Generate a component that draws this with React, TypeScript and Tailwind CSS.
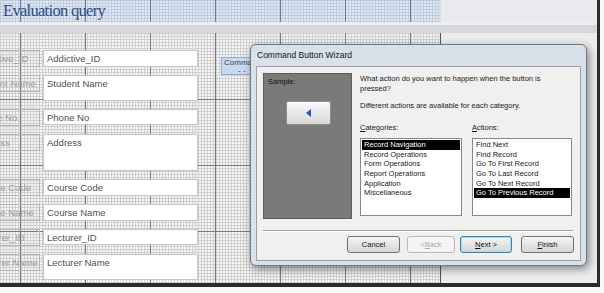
import React from "react";

const fields = [
  { label: "Addictive_ID", value: "Addictive_ID", h: "h-[17px]" },
  { label: "Student Name", value: "Student Name", h: "h-[26px]" },
  { label: "Phone No", value: "Phone No", h: "h-[16px]" },
  { label: "Address", value: "Address", h: "h-[37px]" },
  { label: "Course Code", value: "Course Code", h: "h-[17px]" },
  { label: "Course Name", value: "Course Name", h: "h-[17px]" },
  { label: "Lecturer_ID", value: "Lecturer_ID", h: "h-[16px]" },
  { label: "Lecturer Name", value: "Lecturer Name", h: "h-[26px]" },
];

const categories = ["Record Navigation", "Record Operations", "Form Operations", "Report Operations", "Application", "Miscellaneous"];
const actions = ["Find Next", "Find Record", "Go To First Record", "Go To Last Record", "Go To Next Record", "Go To Previous Record"];

const cols = [20, 85, 150, 215, 280, 345, 410];

function ListBox({ items, selected }: { items: string[]; selected: number }) {
  return (
    <div className="h-[78px] border border-[#828790] bg-white p-px">
      {items.map((item, i) => (
        <div
          key={item}
          className={`h-[9.7px] pl-[2px] text-[7.5px] leading-[9.7px] ${i === selected ? "bg-black text-white" : "text-[#1a1a1a]"}`}
        >
          {item}
        </div>
      ))}
    </div>
  );
}

function WizButton({ children, className = "" }: { children: React.ReactNode; className?: string }) {
  return (
    <div
      className={`flex h-[17px] items-center justify-center rounded-[3px] border bg-[linear-gradient(to_bottom,#f6f6f6,#e4e4e4_50%,#d6d6d6)] text-[7.5px] ${className}`}
    >
      {children}
    </div>
  );
}

export default function App() {
  return (
    <div className="relative h-[293px] w-[604px] overflow-hidden bg-[#fafafa] font-['Liberation_Sans',Arial,sans-serif]">
      <div className="h-[287px] w-[600px] border-b-[4px] border-r-[3px] border-[#2c2c2c] bg-[#ebebeb]">
        {/* form header */}
        <div className="flex h-[22px]">
          <div className="relative w-[441px] bg-[#e3eaf4] bg-[linear-gradient(to_right,#bccbe0_1px,transparent_1px),linear-gradient(to_bottom,#bccbe0_1px,transparent_1px)] bg-[length:3px_3px]">
            <svg className="absolute inset-0" width="441" height="22">
              {cols.map((x) => (
                <line key={x} x1={x + 0.5} y1="0" x2={x + 0.5} y2="22" stroke="#6a7a92" strokeWidth="1" />
              ))}
            </svg>
            <div className="relative ml-[2px] mt-[1px] h-[20px] w-[125px] whitespace-nowrap pl-[1px] font-['Liberation_Serif',serif] text-[16.5px] leading-[19px] tracking-[-0.7px] text-[#2c4f86]">
              Evaluation query
            </div>
          </div>
          <div className="flex-1 bg-[#e9ebee]" />
        </div>
        <div className="h-[3px] bg-[#eeeef1]" />
        <div className="h-[8px] bg-[#d6d7dd]" />

        {/* detail section */}
        <div className="flex h-[250px]">
          <div className="relative w-[441px] border-r border-[#555] bg-[#f6f6f6] bg-[linear-gradient(to_right,#cfcfcf_1px,transparent_1px),linear-gradient(to_bottom,#cfcfcf_1px,transparent_1px)] bg-[length:3px_3px]">
            <svg className="absolute inset-0" width="440" height="250">
              {cols.map((x) => (
                <line key={x} x1={x + 0.5} y1="0" x2={x + 0.5} y2="250" stroke="#7a7a7a" strokeWidth="1" />
              ))}
              {[66, 132, 198].map((y) => (
                <line key={y} x1="0" y1={y + 0.5} x2="440" y2={y + 0.5} stroke="#7a7a7a" strokeWidth="1" />
              ))}
            </svg>

            <div className="relative flex flex-col gap-2 pt-[17px] text-[9.5px]">
              {fields.map((f) => (
                <div key={f.label} className="flex items-start gap-[3px]">
                  <div className="ml-[-30px] h-[17px] w-[70px] whitespace-nowrap border border-[#b5b5b5] pl-[4px] leading-[15px] text-[#9c9c9c]">
                    {f.label}
                  </div>
                  <div className={`${f.h} w-[155px] border border-[#c6c6c6] bg-white pl-[3px] leading-[15px] text-[#4f4f4f]`}>
                    {f.value}
                  </div>
                </div>
              ))}
            </div>

            <div className="absolute left-[221px] top-[24px] h-[18px] w-[34px] border border-[#8ea8cc] bg-[#c8daf0] pl-[2px] text-[8px] leading-[10px] text-[#3a3a3a]">
              Comma
              <div className="pl-[14px] leading-[6px]">- -</div>
            </div>
          </div>
          <div className="flex-1 bg-[#ececec]" />
        </div>
      </div>

      {/* Command Button Wizard dialog */}
      <div className="absolute left-[250px] top-[44px] h-[222px] w-[337px] rounded-[6px] border border-[#6d7884] bg-[#d8e0e9] px-[5px] shadow-[2px_3px_8px_rgba(0,0,0,0.45)]">
        <div className="h-[21px] pl-[1px] pt-[5px] text-[8.5px] leading-[11px] text-[#111]">Command Button Wizard</div>
        <div className="h-[195px] border border-[#98a2ad] bg-[#f0f0f0] p-[6px] text-[7.5px] text-[#1a1a1a]">
          <div className="flex">
            <div className="h-[146px] w-[89px] border border-[#5e5e5e] bg-[#7a7a7a] pl-[4px] pt-[3px]">
              <div className="leading-[10px] text-[#111]">Sample:</div>
              <div className="ml-[18px] mt-[14px] flex h-[24px] w-[45px] items-center justify-center rounded-[2px] border border-[#8c8c8c] bg-[linear-gradient(to_bottom,#fafafa,#e8e8e8_50%,#d9d9d9)]">
                <svg width="5" height="8" viewBox="0 0 5 8">
                  <path d="M5 0 L0 4 L5 8 Z" fill="#2456c8" />
                </svg>
              </div>
            </div>
            <div className="ml-[8px] w-[213px] pt-[1px] leading-[10px]">
              <div>What action do you want to happen when the button is</div>
              <div>pressed?</div>
              <div className="mt-[7px]">Different actions are available for each category.</div>
              <div className="mt-[12px] flex">
                <div className="w-[112px]">
                  <span className="underline">C</span>ategories:
                </div>
                <div>
                  <span className="underline">A</span>ctions:
                </div>
              </div>
              <div className="mt-[5px] flex">
                <div className="w-[102px]">
                  <ListBox items={categories} selected={0} />
                </div>
                <div className="ml-[10px] w-[100px]">
                  <ListBox items={actions} selected={5} />
                </div>
              </div>
            </div>
          </div>
          <div className="mt-[11px] h-[2px] w-[310px] border-b border-t border-b-white border-t-[#a0a0a0]" />
          <div className="mt-[4px] flex">
            <WizButton className="ml-[84px] w-[53px] border-[#707070] text-[#111]">Cancel</WizButton>
            <WizButton className="ml-[7px] w-[48px] border-[#b5b9bd] !bg-[#f4f4f4] !bg-none text-[#a6a6a6]">
              &lt; <span className="underline">B</span>ack
            </WizButton>
            <WizButton className="ml-[5px] w-[52px] border-[#3c7fb1] shadow-[inset_0_0_0_1px_#a6dcf5] text-[#111]">
              <span className="underline">N</span>ext &gt;
            </WizButton>
            <WizButton className="ml-[9px] w-[53px] border-[#707070] text-[#111]">
              <span className="underline">F</span>inish
            </WizButton>
          </div>
        </div>
      </div>
    </div>
  );
}
